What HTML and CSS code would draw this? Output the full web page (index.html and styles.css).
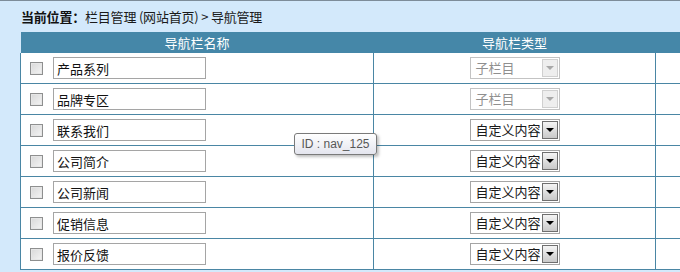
FILE: index.html
```html
<!DOCTYPE html>
<html>
<head>
<meta http-equiv="Content-Type" content="text/html; charset=UTF-8" />
<title>导航管理</title>
<link rel="stylesheet" href="styles.css">
</head>
<body>
<div class="crumb"><b>当前位置：</b>栏目管理 (网站首页) &gt; 导航管理</div>

<table class="navTable">
<tr class="head">
<th class="colName">导航栏名称</th>
<th class="colType">导航栏类型</th>
<th class="colMore"></th>
</tr>
<tr>
<td><span class="chk"></span><input class="txt" type="text" value="产品系列"/></td>
<td class="center"><span class="sel off"><span class="selText">子栏目</span><span class="selBtn"></span></span></td>
<td></td>
</tr>
<tr>
<td><span class="chk"></span><input class="txt" type="text" value="品牌专区"/></td>
<td class="center"><span class="sel off"><span class="selText">子栏目</span><span class="selBtn"></span></span></td>
<td></td>
</tr>
<tr>
<td><span class="chk"></span><input class="txt" type="text" value="联系我们"/></td>
<td class="center"><span class="sel"><span class="selText">自定义内容</span><span class="selBtn"></span></span></td>
<td></td>
</tr>
<tr>
<td><span class="chk"></span><input class="txt" type="text" value="公司简介"/></td>
<td class="center"><span class="sel"><span class="selText">自定义内容</span><span class="selBtn"></span></span></td>
<td></td>
</tr>
<tr>
<td><span class="chk"></span><input class="txt" type="text" value="公司新闻"/></td>
<td class="center"><span class="sel"><span class="selText">自定义内容</span><span class="selBtn"></span></span></td>
<td></td>
</tr>
<tr>
<td><span class="chk"></span><input class="txt" type="text" value="促销信息"/></td>
<td class="center"><span class="sel"><span class="selText">自定义内容</span><span class="selBtn"></span></span></td>
<td></td>
</tr>
<tr>
<td><span class="chk"></span><input class="txt" type="text" value="报价反馈"/></td>
<td class="center"><span class="sel"><span class="selText">自定义内容</span><span class="selBtn"></span></span></td>
<td></td>
</tr>
</table>

<div class="tip">ID : nav_125</div>
</body>
</html>
```

FILE: styles.css
```css
body{
margin: 0;
background: #d3e9fb;
border-top: 1px solid #7d8c99;
font-family: "Noto Sans CJK SC", "Liberation Sans", sans-serif;
font-size: 13px;
color: #1a1a1a;
overflow: hidden;
}

.crumb{
height: 31px;
line-height: 31px;
padding-left: 21px;
white-space: nowrap;
letter-spacing: -0.2px;
}

.crumb b{
color: #111;
}

.navTable{
margin-left: 20px;
border-collapse: collapse;
width: 660px;
table-layout: fixed;
}

.navTable th{
height: 21px;
padding: 0;
background: #4587a8;
color: #fff;
font-weight: normal;
font-size: 13px;
line-height: 21px;
}

.colName{ width: 353px; }
.colType{ width: 282px; }

.navTable td{
height: 30px;
padding: 0;
border: 1px solid #4a86a4;
border-top: none;
background: #fff;
vertical-align: middle;
white-space: nowrap;
}

.navTable td:last-child{
border-right: none;
}

.center{
text-align: center;
}

.chk{
display: inline-block;
width: 11px;
height: 11px;
margin: 0 10px 0 9px;
border: 1px solid #8e8f8f;
background: linear-gradient(135deg, #d8d8d8, #f4f4f4);
box-shadow: inset 0 0 0 1px #e6e6e6;
vertical-align: middle;
}

.txt{
width: 148px;
height: 20px;
margin: 0;
padding: 0 0 0 3px;
border: 1px solid #a5a5a5;
font-family: "Noto Sans CJK SC", sans-serif;
font-size: 13px;
color: #111;
vertical-align: middle;
outline: none;
}

.sel{
display: inline-flex;
width: 88px;
height: 20px;
border: 1px solid #a5a5a5;
background: #fff;
vertical-align: middle;
text-align: left;
}

.selText{
flex: 1;
padding-left: 5px;
line-height: 20px;
font-size: 13px;
}

.selBtn{
width: 14px;
height: 16px;
margin: 1px;
border: 1px solid #6f6f6f;
background: linear-gradient(#f4f4f4, #c9c9c9);
position: relative;
}

.selBtn:after{
content: "";
position: absolute;
left: 3px;
top: 6px;
border-left: 4px solid transparent;
border-right: 4px solid transparent;
border-top: 4px solid #000;
}

.sel.off{
border-color: #c3c3c3;
}

.off .selText{
color: #8f8f8f;
}

.off .selBtn{
border-color: #d0d0d0;
background: #eeeeee;
}

.off .selBtn:after{
border-top-color: #a8a8a8;
}

.tip{
position: absolute;
left: 294px;
top: 133px;
width: 81px;
height: 20px;
line-height: 20px;
border: 1px solid #7a7a7a;
border-radius: 3px;
background: linear-gradient(#ffffff, #e4e5ee);
box-shadow: 2px 2px 3px rgba(0,0,0,0.25);
color: #575757;
font-family: "Liberation Sans", sans-serif;
font-size: 12px;
text-align: center;
}
```
